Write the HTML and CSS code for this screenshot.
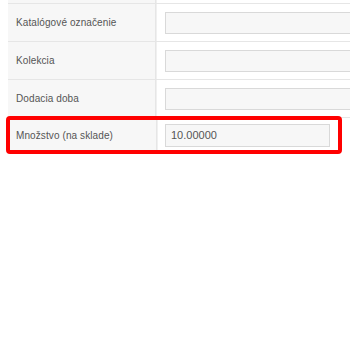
FILE: index.html
```html
<!DOCTYPE html>
<html lang="sk">
<head>
    <meta charset="UTF-8">
    <meta name="viewport" content="width=device-width, initial-scale=1.0">
    <title>Produkt</title>
    <link rel="stylesheet" href="styles.css">
</head>
<body>
    <div class="page">
        <div class="form-table">
            <div class="row row-top">
                <div class="label"></div>
                <div class="value"></div>
            </div>
            <div class="row">
                <div class="label">Katalógové označenie</div>
                <div class="value"><input class="field field-wide" type="text"></div>
            </div>
            <div class="row">
                <div class="label">Kolekcia</div>
                <div class="value"><input class="field field-wide" type="text"></div>
            </div>
            <div class="row">
                <div class="label">Dodacia doba</div>
                <div class="value"><input class="field field-wide" type="text"></div>
            </div>
            <div class="row highlight">
                <div class="label">Množstvo (na sklade)</div>
                <div class="value"><input class="field field-short" type="text" value="10.00000"></div>
            </div>
        </div>
    </div>
</body>
</html>
```

FILE: styles.css
```css
body {
    margin: 0;
    padding: 0;
    background-color: #fff;
    font-family: "Liberation Sans", Arial, sans-serif;
    color: #555;
}
.page {
    width: 350px;
    height: 350px;
    overflow: hidden;
}
.form-table {
    margin-left: 8px;
    width: 420px;
    display: flex;
    flex-direction: column;
}
.row {
    display: flex;
    height: 37px;
    border-bottom: 1px solid #e6e6e6;
}
.row-top {
    height: 3px;
}
.label {
    width: 148px;
    flex-shrink: 0;
    background-color: #f7f7f7;
    border-right: 1px solid #e6e6e6;
    padding-left: 8px;
    box-sizing: border-box;
    display: flex;
    align-items: center;
    font-size: 10px;
    letter-spacing: 0.1px;
}
.value {
    flex: 1;
    display: flex;
    align-items: center;
    padding-left: 8px;
    border-left: 1px solid #f0f0f0;
}
.field {
    height: 22px;
    box-sizing: border-box;
    border: 1px solid #d9d9d9;
    background-color: #f7f7f7;
    font-family: "Liberation Sans", Arial, sans-serif;
    font-size: 11px;
    color: #555;
    padding: 0 5px;
    margin: 0;
}
.field-wide {
    width: 240px;
}
.field-short {
    width: 165px;
    height: 23px;
}
.highlight {
    width: 336px;
    height: 38px;
    box-sizing: border-box;
    margin-left: -2px;
    margin-top: -2px;
    border: 4px solid #f00;
    border-radius: 4px;
}
.highlight .label {
    width: 147px;
    padding-left: 6px;
}
.highlight .value {
    padding-left: 7px;
}
```
